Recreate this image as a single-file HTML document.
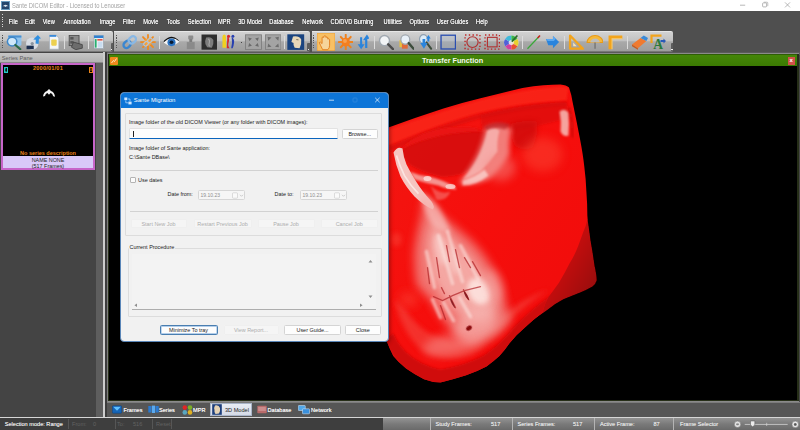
<!DOCTYPE html>
<html>
<head>
<meta charset="utf-8">
<title>Sante DICOM Editor</title>
<style>
*{box-sizing:border-box;margin:0;padding:0}
html,body{width:800px;height:430px;overflow:hidden;background:#000;font-family:"Liberation Sans","DejaVu Sans",sans-serif}
#app{position:absolute;left:0;top:0;width:800px;height:430px;overflow:hidden;background:#474747}
.abs{position:absolute}
i.grip{position:absolute;width:1.2px;background:repeating-linear-gradient(#d8d8d8 0,#d8d8d8 .8px,transparent .8px,transparent 1.7px)}
#titlebar{position:absolute;left:0;top:0;width:800px;height:12px;background:#fff}
#titlebar .t{position:absolute;left:12px;top:1px;font-size:6.400px;line-height:9px;color:#a2a2a2;white-space:nowrap;transform:scaleX(.905);transform-origin:0 0}
#menubar{position:absolute;left:0;top:11px;width:800px;height:20.500px;background:#4f4f4f}
#menubar span{position:absolute;top:7px;font-size:6.300px;line-height:8px;color:#f6f6f6;white-space:nowrap;text-shadow:0 0 .6px #fff,0 .4px 1px #222;text-align:center;transform:scaleX(.9);display:flex;justify-content:center}
#toolbar{position:absolute;left:0;top:31.200px;width:800px;height:20.5px;background:#4f4f4f}
.tb{position:absolute;top:0;height:20.5px;background:linear-gradient(#d2d2d2,#c2c2c2 45%,#a9a9a9 52%,#9e9e9e);border-radius:0 2px 2px 0;border-top:.5px solid #e6e6e6;border-bottom:.5px solid #777}
.tb i.grip{left:1.5px;top:3px;height:14px;background:repeating-linear-gradient(#555 0,#555 .8px,transparent .8px,transparent 1.7px)}
.tb b.sep{position:absolute;top:4px;height:13px;width:1px;background:linear-gradient(90deg,#8c8c8c 50%,#dcdcdc 50%)}
.tb svg{position:absolute}
.tb em.chev{position:absolute;right:0;bottom:0;width:2.800px;height:7.500px;background:#5c5c5c;border-radius:1px 0 1px 0}.tb em.chev:after{content:'';position:absolute;left:.8px;bottom:1px;width:1.200px;height:1.200px;background:#eee}
#mid{position:absolute;left:0;top:52px;width:800px;height:3px;background:#5a5a5a}
#left{position:absolute;left:0;top:52px;width:104.800px;height:365px;background:#444}
#vframe{position:absolute;left:107px;top:53px;width:691.500px;height:349px;background:#262e18;border-top:1px solid #8a8a8a;border-left:1px solid #7c7c7c;border-bottom:1px solid #8a8a8a}#vgap{position:absolute;left:105px;top:52px;width:2px;height:366px;background:#3c3c3c}
#viewer{position:absolute;left:108.500px;top:54.400px;width:688.200px;height:345.400px;background:#000;overflow:hidden}
#greenbar{position:absolute;left:0;top:0;width:688.200px;height:11.500px;border-top:.6px solid #2f5c06;background:linear-gradient(#458608,#3b7a02)}
#greenbar .gt{position:absolute;left:299px;width:90px;top:1.500px;text-align:center;font-size:7.250px;line-height:8px;font-weight:bold;color:#f4f8ee;white-space:nowrap}
#greenbar .gx{position:absolute;left:679px;top:1.5px;width:7.5px;height:8px;background:#d2524a;color:#fff;font-size:6px;line-height:7px;text-align:center;font-weight:bold}
#left .hdr{position:absolute;left:0;top:.5px;width:103.200px;height:10.5px;background:linear-gradient(#c6c6c6,#b2b2b2);color:#5e5e5e;font-size:5.700px;line-height:10px;padding-left:1.800px;white-space:nowrap;border-bottom:.5px solid #8a8a8a}
#left .strip{position:absolute;left:96px;top:11px;width:7.500px;height:354px;background:#5e5e5e}
#left .vline{position:absolute;left:103.200px;top:0;width:1.600px;height:365px;background:#cdcdcd}
#left .thumb{position:absolute;left:1px;top:11px;width:94px;height:107px;background:#000;border:2px solid #c765c9}
.thumb .tb1{position:absolute;left:.5px;top:2px;width:4px;height:6px;border:.6px solid #25c7c7;color:#25c7c7;font-size:4.5px;line-height:5px;text-align:center}
.thumb .tbx{position:absolute;left:85.500px;top:2px;width:4.5px;height:6px;border:.6px solid #e8841a;color:#e8841a;font-size:4.5px;line-height:4.6px;text-align:center}
.thumb .tdate{position:absolute;left:0;width:90px;top:.1px;text-align:center;font-size:5.6px;line-height:7px;font-weight:bold;color:#e8841a;letter-spacing:.2px}
.thumb .tnsd{position:absolute;left:0;width:90px;top:84.600px;text-align:center;font-size:5.5px;line-height:7px;font-weight:bold;color:#e8841a}
.thumb .tinfo{position:absolute;left:0;width:90px;top:91px;height:12px;background:#d9c9f9;text-align:center;font-size:5.400px;line-height:5.500px;color:#222;padding-top:2.300px}
#dlgsh{position:absolute;left:118px;top:91.500px;width:272px;height:252.500px;border-radius:6px;background:rgba(0,0,0,.35);filter:blur(2px)}
#dlg{position:absolute;left:119.500px;top:92px;width:269px;height:249.500px;background:#f1f1f1;border-radius:4px;overflow:hidden;border:.5px solid #5a86b8}
#dlgt{position:absolute;left:0;top:0;width:271px;height:16.300px;background:#0d75d8}
#dlgt .dt{position:absolute;left:14.300px;top:4.600px;font-size:5.950px;line-height:8px;color:#fff;white-space:nowrap}
.gb{position:absolute;border:.6px solid #dcdcdc;border-radius:1px}
.lbl{position:absolute;font-size:5.450px;line-height:7px;color:#222;white-space:nowrap}
.lbl.gl{background:#f1f1f1;padding:0 .5px}
.hr{position:absolute;height:.8px;background:#d2d2d2}
.inp{position:absolute;background:#fdfdfd;border:.5px solid #e2e2e2;border-bottom:1px solid #0a64bd;border-radius:1.500px 1.500px 0 0}
.inp u{position:absolute;left:3.500px;top:1.500px;width:.6px;height:6.500px;background:#222}
.btn{position:absolute;height:9.500px;border:.6px solid #d4d4d4;border-radius:1.500px;background:#fdfdfd;font-size:5.450px;line-height:8.400px;text-align:center;color:#222;white-space:nowrap}
.btn.dis{color:#adadad;background:#f5f5f5;border-color:#efefef;text-shadow:none}
.btn.foc{border:.8px solid #4a7eb0;box-shadow:0 0 0 .4px #6aa0d8 inset}
.chk{position:absolute;width:6px;height:6px;border:.6px solid #b4b4b4;border-radius:1px;background:#fbfbfb}
.date{position:absolute;height:10.500px;border:.6px solid #d6d6d6;border-radius:1.500px;background:#f6f6f6;font-size:5px;line-height:9.500px;color:#8e8e8e;padding-left:2px;white-space:nowrap}
.date svg{position:absolute;left:33px;top:1.700px}
.ta{position:absolute;background:#f3f3f3;border-bottom:.8px solid #adadad}
#tabbar{position:absolute;left:107px;top:401.500px;width:693px;height:15.500px;background:#565656;border-top:.8px solid #7c7c7c}
.tab{position:absolute;top:1px;height:12.500px;white-space:nowrap}
.tab svg{position:absolute;left:1.500px;top:1.500px}
.tab span{position:absolute;top:2.300px;font-size:5.600px;line-height:8px;color:#f0f0f0;text-shadow:0 0 .5px #fff}
.tab.sel{background:linear-gradient(#e8ecf4,#d4dae6);border:.6px solid #a8b4c8;top:.2px;height:13.600px}
.tab.sel span{color:#222;text-shadow:none}
.tab.sel svg{top:.8px}
#hline{position:absolute;left:0;top:416.700px;width:800px;height:1.100px;background:#d6d6d6}
#status{position:absolute;left:0;top:417.800px;width:800px;height:12.200px;background:#3e3e3e}
.sl{position:absolute;top:2.400px;font-size:5.600px;line-height:8px;color:#e2e2e2;white-space:nowrap;text-shadow:0 0 .5px #ddd}
.sl.dim{color:#626262;text-shadow:none}
b.ssep{position:absolute;top:1.500px;width:1px;height:9.500px;background:#565656}
#sright{position:absolute;left:382.500px;top:0;width:417.500px;height:12.200px;background:linear-gradient(#939393,#7a7a7a 50%,#6a6a6a)}
b.rsep{position:absolute;top:0;width:1.400px;height:12.200px;background:linear-gradient(90deg,#444 50%,#b4b4b4 50%)}
#dlgin{position:absolute;left:-1px;top:-1.500px;width:270px;height:251px}

</style>
</head>
<body>
<div id="app">
<div id="titlebar">
<svg class="abs" style="left:1px;top:1px" width="9" height="9" viewBox="0 0 9 9"><rect width="9" height="9" fill="#6a9cc0"/><rect x="1" y="1" width="7" height="7" fill="#24456c"/><path d="M1.5 5.5 Q4.5 2 7.5 5.5 L6 5 L4.5 6 L3 5Z" fill="#dfe8f0"/></svg>
<div class="t">Sante DICOM Editor - Licensed to Lenouser</div>
<svg class="abs" style="left:736px;top:0" width="64" height="11" viewBox="0 0 64 11"><path d="M4 5.2h5.2" stroke="#9a9a9a" stroke-width="0.7" fill="none"/><rect x="26.6" y="2.9" width="4" height="4" rx="0.8" fill="none" stroke="#9a9a9a" stroke-width="0.7"/><path d="M27.8 2.2h3.2q.8 0 .8.8v3.2" fill="none" stroke="#9a9a9a" stroke-width="0.6"/><path d="M49 2.4l5 5M54 2.4l-5 5" stroke="#9a9a9a" stroke-width="0.7" fill="none"/></svg>
</div>
<div id="menubar"><i class="grip" style="left:2px;top:3px;height:13px"></i><span style="left:9px;width:8.5px">File</span><span style="left:25px;width:10px">Edit</span><span style="left:43px;width:11.5px">View</span><span style="left:62px;width:30px">Annotation</span><span style="left:100px;width:15px">Image</span><span style="left:123px;width:12px">Filter</span><span style="left:143px;width:15.5px">Movie</span><span style="left:166.5px;width:12.5px">Tools</span><span style="left:187.5px;width:23.0px">Selection</span><span style="left:218.5px;width:10.5px">MPR</span><span style="left:237.5px;width:24.5px">3D Model</span><span style="left:270px;width:23px">Database</span><span style="left:301.5px;width:21.5px">Network</span><span style="left:331px;width:42px">CD/DVD Burning</span><span style="left:381.5px;width:21.5px">Utilities</span><span style="left:408.75px;width:20.75px">Options</span><span style="left:437px;width:31px">User Guides</span><span style="left:475.75px;width:11.75px">Help</span></div>
<div id="toolbar">
<div class="tb" style="left:0px;width:113.3px">
<i class="grip"></i>
<svg style="left:5.0px;top:2px" width="17.5" height="16.2" viewBox="0 0 16 16" preserveAspectRatio="none"><rect x="3" y="1.500" width="12" height="10" rx="1" fill="#8fc4ee"/><rect x="3" y="1.500" width="12" height="2" fill="#4a90d0"/><circle cx="6.500" cy="7.500" r="4.300" fill="#cfe8fa" stroke="#3f88c8" stroke-width="1.400"/><path d="M9.500 10.800l4.500 4.200" stroke="#2a6a4a" stroke-width="2" stroke-linecap="round"/></svg>
<svg style="left:25.0px;top:2px" width="16.5" height="16.2" viewBox="0 0 16 16" preserveAspectRatio="none"><circle cx="7" cy="9.500" r="6" fill="#d8dde4"/><circle cx="7" cy="9.500" r="1.600" fill="#8a94a0"/><path d="M8 5.500L12.500 1l3 3.500-2 .2-.3 5.300-3-.5.300-3.800z" fill="#2f8fe0"/><rect x="1.500" y="11.500" width="7" height="3.500" fill="#1d3050"/></svg>
<svg style="left:46.5px;top:2px" width="13.5" height="16.2" viewBox="0 0 16 16" preserveAspectRatio="none"><path d="M3 1h8l3 3v11H3z" fill="#f4f6f8" stroke="#9aa6b4" stroke-width=".6"/><rect x="3" y="1" width="8" height="1.800" fill="#3a8ad8"/><rect x="5" y="5.500" width="6.500" height="6" rx="1" fill="#ecd050"/></svg>
<b class="sep" style="left:63.5px"></b>
<svg style="left:67.0px;top:2px" width="17.5" height="16.2" viewBox="0 0 16 16" preserveAspectRatio="none"><rect x="2" y="1.500" width="9" height="10" fill="#8a8a8a" stroke="#4a4a4a" stroke-width=".8"/><rect x="3" y="3" width="3" height="2.500" fill="#555"/><rect x="3" y="7" width="3" height="2.500" fill="#555"/><path d="M6 8l8 2.500v3.500l-6 1.500L4 13z" fill="#6c6c6c" stroke="#3c3c3c" stroke-width=".7"/></svg>
<b class="sep" style="left:87.5px"></b>
<svg style="left:92.0px;top:2px" width="13.0" height="16.2" viewBox="0 0 16 16" preserveAspectRatio="none"><rect x="2.500" y="1.500" width="11.500" height="13" fill="#f0f2f4" stroke="#8a9aaa" stroke-width=".6"/><rect x="2.500" y="1.500" width="11.500" height="2.500" fill="#2f80d0"/><rect x="3.500" y="5" width="2.200" height="8.500" fill="#28b070"/><rect x="6.500" y="5" width="6.500" height="1.500" fill="#e04a3a"/><rect x="7" y="7.500" width="6" height="6" fill="#c8dcf0"/></svg>
<em class="chev"></em></div>
<div class="tb" style="left:114px;width:196px">
<i class="grip"></i>
<svg style="left:7.5px;top:2px" width="15.5" height="16.2" viewBox="0 0 16 16" preserveAspectRatio="none"><g transform="rotate(-40 8 8)" fill="none" stroke-width="2.400"><rect x="0.500" y="5" width="8" height="6" rx="3" stroke="#3a86d0"/><rect x="7.500" y="5" width="8" height="6" rx="3" stroke="#8ab8e4"/></g></svg>
<svg style="left:25.5px;top:2px" width="16.0" height="16.2" viewBox="0 0 16 16" preserveAspectRatio="none"><g stroke="#f08a1e" stroke-width="1.800" stroke-linecap="round"><path d="M8 1v14M1 8h14M3 3l10 10M13 3L3 13"/></g><circle cx="8" cy="8" r="3.600" fill="#f6a23c"/><g transform="rotate(-40 8 8)" fill="none" stroke="#b8c4d0" stroke-width="1.300"><rect x="3" y="6.200" width="5" height="3.600" rx="1.800"/><rect x="8" y="6.200" width="5" height="3.600" rx="1.800"/></g></svg>
<b class="sep" style="left:44.5px"></b>
<svg style="left:48.5px;top:2px" width="17.0" height="16.2" viewBox="0 0 16 16" preserveAspectRatio="none"><path d="M.5 8.500Q8 0 15.500 7.500Q8 15 .5 8.500z" fill="#f4f4f4"/><path d="M.5 8.500Q8 .500 15.500 7.500L14 5.500Q8-.500 1 6.500z" fill="#111"/><circle cx="8" cy="8.200" r="3.800" fill="#2a72c0"/><circle cx="8" cy="8.200" r="1.800" fill="#0a1a30"/></svg>
<svg style="left:70.5px;top:2px" width="11.5" height="16.2" viewBox="0 0 16 16" preserveAspectRatio="none"><rect x="4.500" y="1.500" width="7" height="4" rx="1" fill="#8c8c8c"/><rect x="6" y="5" width="4" height="3" fill="#7c7c7c"/><path d="M2.500 8h11v7h-11z" fill="#8a8a8a"/></svg>
<svg style="left:86.5px;top:2px" width="16.5" height="16.2" viewBox="0 0 16 16" preserveAspectRatio="none"><rect x=".5" y=".5" width="15" height="15" fill="#2e2e2e"/><path d="M5 3.500Q10 2 12 6Q12.500 10 10.500 13.500L6 13Q3.500 10 4 7z" fill="#7c7c7c"/><path d="M7 5q2 1 1 4t1 3" stroke="#a8a8a8" stroke-width="1" fill="none"/></svg>
<svg style="left:107.0px;top:2px" width="15.5" height="16.2" viewBox="0 0 16 16" preserveAspectRatio="none"><path d="M1.500 2.500h3.500l.5 11H1.500z" fill="#f0d020"/><circle cx="3.300" cy="2" r="1.600" fill="#f0d020"/><path d="M6.500 3q3 1 1.500 5t1 6H6z" fill="#d8282c"/><circle cx="7.800" cy="2.300" r="1.600" fill="#d8282c"/><path d="M11 3q3 1.500 2.500 5.500T12 14h-1.500q1.500-5 .5-11z" fill="#2840b0"/><circle cx="12.300" cy="2.300" r="1.500" fill="#2840b0"/></svg>
<b style="position:absolute;left:127.0px;top:9.500px;width:1px;height:1px;background:#444"></b>
<svg style="left:130.5px;top:2px" width="17.0" height="16.2" viewBox="0 0 16 16" preserveAspectRatio="none"><rect x=".5" y=".8" width="15" height="14.400" fill="#a4a4a4" stroke="#7c7c7c" stroke-width=".8"/><g fill="#6a6a6a"><path d="M3 3.500l3.500 1-2.500 2.500zM13 3.500l-3.500 1 2.500 2.500zM3 12.500l3.500-1-2.500-2.500zM13 12.500l-3.500-1 2.500-2.500z"/></g></svg>
<svg style="left:150.5px;top:2px" width="16.5" height="16.2" viewBox="0 0 16 16" preserveAspectRatio="none"><rect x=".5" y=".8" width="15" height="14.400" fill="#a4a4a4" stroke="#7c7c7c" stroke-width=".8"/><g fill="#6e6e6e"><path d="M2.500 2.800l3.800.6-3.200 3.200zM13.500 2.800l-3.800.6 3.200 3.200zM2.500 13.200l3.800-.6-3.200-3.200zM13.500 13.200l-3.800-.6 3.200-3.200z"/></g></svg>
<b class="sep" style="left:170.0px"></b>
<svg style="left:173.0px;top:2px" width="17.5" height="16.2" viewBox="0 0 16 16" preserveAspectRatio="none"><rect x=".3" y=".3" width="15.400" height="15.400" fill="#1a4480"/><path d="M5.500 2.500Q11 1.500 13 5.500Q13.500 10 11.500 14L7 13.500Q5.500 11 6 9L4 8z" fill="#e8d8b8"/><path d="M8.500 5.500l2 .3" stroke="#6a5a4a" stroke-width=".8"/></svg>
<em class="chev"></em></div>
<div class="tb" style="left:311.8px;width:361.7px">
<i class="grip"></i>
<svg style="left:5.2px;top:1.3px" width="18.0" height="17.8" viewBox="0 0 16 16" preserveAspectRatio="none"><rect x="0" y="0" width="16" height="16" rx="1" fill="#f8c064" stroke="#e89a30" stroke-width=".7"/><path d="M5 15Q3 11 2 8.500Q3 7.500 4.500 9.500V4q1-1 1.600 0V3q1-1.200 1.800 0v1q1-1 1.700.2V5.500q1-.8 1.600.3V11q0 2.500-1.500 4z" fill="#f6d49a" stroke="#e07a18" stroke-width=".8"/></svg>
<svg style="left:26.2px;top:2px" width="15.5" height="16.2" viewBox="0 0 16 16" preserveAspectRatio="none"><g stroke="#f0821c" stroke-width="2" stroke-linecap="round"><path d="M8 .8v14.400M.8 8h14.400M2.900 2.900l10.200 10.200M13.100 2.900L2.900 13.100"/></g><circle cx="8" cy="8" r="4.300" fill="#f47f20"/><circle cx="7.200" cy="7" r="2" fill="#f8a050"/></svg>
<svg style="left:45.7px;top:2px" width="13.0" height="16.2" viewBox="0 0 16 16" preserveAspectRatio="none"><path d="M5 15.500V7H2l5.500-6.500L10 3.500v2H8v10z" fill="#2a84dc" transform="translate(5.500 0) scale(.9)"/><path d="M4.500 1.500v8h-3.500L6 15.500l5-6h-3.500v-8z" fill="#2a84dc" transform="translate(0 2) scale(.85)"/></svg>
<b class="sep" style="left:62.2px"></b>
<svg style="left:66.7px;top:2px" width="16.0" height="16.2" viewBox="0 0 16 16" preserveAspectRatio="none"><circle cx="6.500" cy="6.500" r="5" fill="#f2f4f6" stroke="#a0a8b0" stroke-width="1.400"/><path d="M10.200 10.200l4.800 4.800" stroke="#4c4c4c" stroke-width="2.400" stroke-linecap="round"/></svg>
<svg style="left:87.2px;top:2px" width="15.5" height="16.2" viewBox="0 0 16 16" preserveAspectRatio="none"><rect x=".5" y="6" width="7" height="7" fill="#e8c040"/><rect x="3" y="9" width="6" height="5.500" fill="#e06a3a"/><circle cx="6.500" cy="5.500" r="4.600" fill="#e8f0f8" stroke="#a0a8b0" stroke-width="1.300"/><path d="M10 9l5 5.500" stroke="#3c4c3c" stroke-width="2.400" stroke-linecap="round"/></svg>
<svg style="left:106.7px;top:2px" width="14.5" height="16.2" viewBox="0 0 16 16" preserveAspectRatio="none"><circle cx="6" cy="5" r="4.300" fill="#dcecf8" stroke="#90a0b0" stroke-width="1.200"/><path d="M9.500 8.500l5 6" stroke="#3c4c3c" stroke-width="2.200" stroke-linecap="round"/><path d="M2.500 9h2.500v-4h3v4h2.500l-4 5.500z" fill="#2a84dc"/><path d="M11.500 1l2.500 3.500h-1.500v3h-2v-3H9z" fill="#2a84dc"/></svg>
<b class="sep" style="left:124.7px"></b>
<svg style="left:128.2px;top:2px" width="16.5" height="16.2" viewBox="0 0 16 16" preserveAspectRatio="none"><rect x="1" y="1.200" width="14" height="13.600" fill="#9cb0cc" fill-opacity=".25" stroke="#2a4eb0" stroke-width="1.300"/></svg>
<svg style="left:152.2px;top:2px" width="17.0" height="16.2" viewBox="0 0 16 16" preserveAspectRatio="none"><rect x="1" y="1" width="14" height="14" fill="none" stroke="#c02020" stroke-width="1.300" stroke-dasharray="1.300 2.200"/><circle cx="8" cy="8" r="5.300" fill="none" stroke="#b03030" stroke-width="1.100"/></svg>
<svg style="left:172.2px;top:2px" width="16.5" height="16.2" viewBox="0 0 16 16" preserveAspectRatio="none"><rect x="1" y="1" width="14" height="14" fill="none" stroke="#c02020" stroke-width="1.300" stroke-dasharray="1.300 2.200"/><rect x="3.300" y="3.300" width="9.400" height="9.400" fill="none" stroke="#b03030" stroke-width="1.100"/></svg>
<svg style="left:191.2px;top:2px" width="16.5" height="16.2" viewBox="0 0 16 16" preserveAspectRatio="none"><circle cx="8" cy="8.500" r="7" fill="#e8e8e8"/><path d="M8 8.500L8 1.500A7 7 0 0 1 14 5z" fill="#3cb84a"/><path d="M8 8.500L14 5A7 7 0 0 1 14 12z" fill="#e8d030"/><path d="M8 8.500L14 12A7 7 0 0 1 8 15.500z" fill="#e85030"/><path d="M8 8.500L8 15.500A7 7 0 0 1 2 12z" fill="#d040a0"/><path d="M8 8.500L2 12A7 7 0 0 1 2 5z" fill="#5060d8"/><path d="M8 8.500L2 5A7 7 0 0 1 8 1.500z" fill="#40b8d8"/><circle cx="8" cy="8.500" r="2.500" fill="#f4f4f4" fill-opacity=".8"/><path d="M8.500 7.500L14 1.500" stroke="#2a6a2a" stroke-width="1.600"/></svg>
<b class="sep" style="left:210.7px"></b>
<svg style="left:214.2px;top:2px" width="15.5" height="16.2" viewBox="0 0 16 16" preserveAspectRatio="none"><path d="M1.500 14.500L14 2" stroke="#3aa83a" stroke-width="1.300"/><path d="M12 4L14.500 1.500" stroke="#d02020" stroke-width="1.500"/></svg>
<svg style="left:233.7px;top:2px" width="15.0" height="16.2" viewBox="0 0 16 16" preserveAspectRatio="none"><path d="M1 5h7.500V2L15 8l-6.500 6v-3H3.500z" fill="#2a84dc"/><path d="M1 5h7.500V2l3 2.800-2 2.200H3z" fill="#5aa8f0"/></svg>
<b class="sep" style="left:252.2px"></b>
<svg style="left:256.2px;top:2px" width="16.5" height="16.2" viewBox="0 0 16 16" preserveAspectRatio="none"><path d="M2 1.500L14.500 14.500H2z" fill="none" stroke="#f2a41c" stroke-width="2.200" stroke-linejoin="round"/><path d="M5 8.500l3.500 3.500H5z" fill="#fbe4b0"/></svg>
<svg style="left:274.2px;top:2px" width="17.0" height="16.2" viewBox="0 0 16 16" preserveAspectRatio="none"><path d="M1 8.500A7.500 7 0 0 1 16 8.500z" fill="#f6b838" stroke="#e89a18" stroke-width="1"/><path d="M4 8.500A4.500 4 0 0 1 13 8.500z" fill="#bcbcbc"/><path d="M8.500 8.500v6" stroke="#666" stroke-width="1"/></svg>
<svg style="left:295.2px;top:2px" width="17.5" height="16.2" viewBox="0 0 16 16" preserveAspectRatio="none"><path d="M3 15V3h11" fill="none" stroke="#f2a41c" stroke-width="3.200"/><path d="M4.600 15V4.600H14" fill="none" stroke="#f8cc70" stroke-width="1"/></svg>
<b class="sep" style="left:315.2px"></b>
<svg style="left:319.2px;top:2px" width="17.0" height="16.2" viewBox="0 0 16 16" preserveAspectRatio="none"><path d="M1 10.500L9 4l5.500 3-8 7z" fill="#f07a30"/><path d="M9 4l3-2.500L16 4l-1.500 3z" fill="#3a8ad8"/><path d="M1 10.500l5.500 3.500v1.500L1 12z" fill="#c85a1a"/></svg>
<svg style="left:338.2px;top:2px" width="16.0" height="16.2" viewBox="0 0 16 16" preserveAspectRatio="none"><path d="M1.500 9V1.500h10" fill="none" stroke="#f2a41c" stroke-width="2.200"/><text x="3.200" y="15.300" font-family="Liberation Serif,serif" font-size="13.500" font-weight="bold" fill="#2a7a3a">A</text><path d="M10.500 6h3V4.500L16 7l-2.500 2.500V8h-3z" fill="#2a5ab8"/></svg>
<em class="chev"></em></div>
</div>
<div id="mid"></div>
<div id="left">
<div class="hdr">Series Pane</div>
<div class="strip"></div>
<div class="vline"></div>
<div class="thumb">
<div class="tb1">1</div><div class="tdate">2000/01/01</div><div class="tbx">x</div>
<svg class="abs" style="left:38.500px;top:22.500px" width="14" height="10" viewBox="0 0 14 10"><path d="M1 8.5Q1.5 4 5 3L7 1L9 3Q12.5 4.2 13 8.8L11.2 8.2Q10.5 5.5 8.6 5L7 6.8L5.4 5Q3.5 5.5 3 8Z" fill="#f2f2f2"/></svg>
<div class="tnsd">No series description</div>
<div class="tinfo">NAME NONE<br>(517 Frames)</div>
</div>
</div>

<div id="vgap"></div><div id="vframe"></div>
<div id="viewer"><div id="greenbar"><svg class="abs" style="left:1px;top:1.5px" width="8" height="8" viewBox="0 0 8 8"><rect width="8" height="8" rx="1" fill="#f08a1c"/><path d="M1.5 6l2-2.5 1 1 2-3" stroke="#fff3d0" stroke-width="0.9" fill="none"/></svg><div class="gt">Transfer Function</div><div class="gx">x</div></div>
<svg class="abs" style="left:0;top:0" width="688.200" height="345.400" viewBox="108.500 54.400 688.200 345.400">
<defs>
<filter id="b0" x="-20%" y="-20%" width="140%" height="140%"><feGaussianBlur stdDeviation=".6"/></filter>
<filter id="b1" x="-20%" y="-20%" width="140%" height="140%"><feGaussianBlur stdDeviation="1.100"/></filter>
<filter id="b2" x="-30%" y="-30%" width="160%" height="160%"><feGaussianBlur stdDeviation="2.500"/></filter>
<filter id="b4" x="-40%" y="-40%" width="180%" height="180%"><feGaussianBlur stdDeviation="5"/></filter>
<filter id="b8" x="-50%" y="-50%" width="200%" height="200%"><feGaussianBlur stdDeviation="9"/></filter>
<linearGradient id="gbody" x1="0" y1="0" x2="1" y2="1"><stop offset="0" stop-color="#f21812"/><stop offset=".5" stop-color="#f60e0c"/><stop offset="1" stop-color="#ee0c0c"/></linearGradient>
<linearGradient id="gflap" x1="0" y1="0" x2="1" y2="1"><stop offset="0" stop-color="#e01212"/><stop offset=".55" stop-color="#c00c0c"/><stop offset="1" stop-color="#860606"/></linearGradient>
<clipPath id="cbody"><path d="M380 132L388 128Q415 118 443 109Q462 103 480 98.700Q500 93.500 522 88.300Q545 85 560 85Q566 85.500 568.500 88Q571 95 572 102L576.300 123L579.600 140Q582.500 155 583.800 167Q585.500 180 585.900 192Q587 206 586.900 220Q585.500 227 582.700 232.600Q580 240 577.500 247Q574 256 569 264Q564 274 558.600 283Q553 291 548 297.500Q544 304 542 313Q533 320 524.400 328Q516 335 509 343.700Q504 351 498.900 356.500Q493 362 486 366.800Q476 372 465.600 375.700Q452 380 440 383Q431 382.500 423.500 379.600Q414 375 405.600 369Q398 363 392.800 356.500Q389 349 386 341L380 341Z"/></clipPath>
</defs>
<!-- outer translucent flap -->
<path d="M584 200Q588 225 590 241Q592.500 255 594 266Q596 275 596.300 280.700Q595 285 592 287Q586 290.500 579.600 293Q571 296.500 562.800 299.600Q554 304 546 311L530 322L560 250Z" fill="url(#gflap)" filter="url(#b0)"/>
<path d="M380 132L388 128Q415 118 443 109Q462 103 480 98.700Q500 93.500 522 88.300Q545 85 560 85Q566 85.500 568.500 88Q571 95 572 102L576.300 123L579.600 140Q582.500 155 583.800 167Q585.500 180 585.900 192Q587 206 586.900 220Q585.500 227 582.700 232.600Q580 240 577.500 247Q574 256 569 264Q564 274 558.600 283Q553 291 548 297.500Q544 304 542 313Q533 320 524.400 328Q516 335 509 343.700Q504 351 498.900 356.500Q493 362 486 366.800Q476 372 465.600 375.700Q452 380 440 383Q431 382.500 423.500 379.600Q414 375 405.600 369Q398 363 392.800 356.500Q389 349 386 341L380 341Z" fill="url(#gbody)"/>
<g clip-path="url(#cbody)">
<!-- bottom rim darker band -->
<path d="M384 341Q392 360 406 371Q424 384 440 386Q470 379 487 369Q502 357 510 345Q526 328 543 314L562 300L553 294Q530 310 513 328Q499 346 483 356Q464 366 440 370Q420 366 406 353Q397 344 393 334Z" fill="#cc0a0a" filter="url(#b1)" opacity=".9"/>
<!-- chin lighter zone -->
<path d="M394 300Q400 330 420 350Q440 364 470 356Q492 346 506 326Q520 308 548 290Q520 300 500 318Q480 340 450 342Q420 335 405 310Z" fill="#f43a34" filter="url(#b2)" opacity=".8"/>
<!-- top band lighter -->
<path d="M380 134L388 130Q443 111 480 100.500Q522 90 560 87L568 88L566 101Q520 103 480 113Q440 124 388 146L380 148Z" fill="#fa2a1a" opacity=".7" filter="url(#b1)"/>
<path d="M388 147Q440 125 480 114.500Q520 104.500 566 102L566 106Q520 109 480 119Q440 130 390 152Z" fill="#cc0c0c" opacity=".5" filter="url(#b1)"/>
<!-- eye socket (darker) -->
<path d="M399 151Q420 136 452 131Q478 128 488 134Q486 150 476 166Q462 178 440 177Q418 172 408 164Q402 158 399 151Z" fill="#d41010" filter="url(#b1)" opacity=".85"/>
<path d="M400 150Q440 131 486 132Q474 124 440 129Q414 134 400 150Z" fill="#ea1612" filter="url(#b1)" opacity=".9"/>
<!-- second socket region right -->
<path d="M480 116Q520 105 566 103L570 118Q548 124 530 128Q505 132 482 132Z" fill="#d40e0e" filter="url(#b1)" opacity=".55"/>
<path d="M511 124Q522 120 536 122Q538 136 532 148Q522 152 514 146Q510 136 511 124Z" fill="#cc0e0e" filter="url(#b2)" opacity=".75"/>
<ellipse cx="542" cy="155" rx="20" ry="17" fill="#fb4634" filter="url(#b4)" opacity=".5"/>
<!-- nasal arch pink -->
<path d="M485 128Q498 122 511 129Q508 142 509 154Q502 168 488 180Q474 186 458 184Q466 174 474 160Q482 145 485 128Z" fill="#f29894" filter="url(#b2)" opacity=".8"/>
<path d="M487 130Q494 127 499 131Q496 142 497 152Q490 162 480 172Q470 178 462 180Q474 166 480 152Q485 140 487 130Z" fill="#f8ccc8" filter="url(#b1)" opacity=".6"/>
<ellipse cx="500" cy="168" rx="15" ry="13" fill="#f48480" filter="url(#b4)" opacity=".5"/>
<path d="M484 127Q496 120 510 125L504 130Q494 126 486 131Z" fill="#b01c20" filter="url(#b1)" opacity=".55"/>
<path d="M462 181Q474 178 484 170L488 176Q476 186 462 186Z" fill="#fbe0dc" filter="url(#b1)" opacity=".7"/>
<!-- small pink at upper right -->
<path d="M559 112Q564 108 568 113Q569 124 568 136Q563 138 560 132Q561 122 559 112Z" fill="#f6b4ae" filter="url(#b1)" opacity=".9"/>
<path d="M569 108Q572 120 572 138" stroke="#a00c0c" stroke-width="1.600" fill="none" filter="url(#b1)" opacity=".6"/>
<!-- left white streaks -->
<path d="M393 153Q397 146 402 149Q403 158 406 165Q410 173 415 181Q421 191 431 202Q435 208 432 210Q422 205 414 197Q405 187 400 177Q395 165 393 153Z" fill="#f7cfca" filter="url(#b0)" opacity=".95"/><path d="M396 156Q399 166 404 176Q410 186 418 194" stroke="#fdeeea" stroke-width="1.600" fill="none" filter="url(#b0)" opacity=".8"/>
<path d="M409 172Q418 176 428 177Q440 180 448 184Q455 186 456 190Q446 190 438 186Q426 184 414 180Z" fill="#f6aaa6" filter="url(#b1)" opacity=".85"/>
<ellipse cx="427" cy="179" rx="4" ry="2.500" fill="#fde0dc" filter="url(#b0)" opacity=".8"/>
<ellipse cx="450" cy="187" rx="5" ry="2.500" fill="#fcd4d0" filter="url(#b0)" opacity=".8"/>
<path d="M430 186Q440 196 450 192Q446 202 436 200Z" fill="#f47874" filter="url(#b1)" opacity=".6"/>
<!-- jaw pink fan -->
<path d="M424 195Q432 206 440 215Q456 228 470 240Q482 252 490 265Q498 280 503 297Q508 310 510 320Q504 330 495 335Q482 342 470 345Q458 340 450 330Q438 316 430 300Q420 292 416 285Q413 268 414 250Q416 234 420 220Q422 206 424 195Z" fill="#f08c88" filter="url(#b4)" opacity=".8"/>
<path d="M432 222Q444 230 456 244Q470 256 480 272Q490 286 496 302Q494 316 482 322Q466 322 454 310Q440 296 432 278Q426 258 428 240Z" fill="#f6bcb8" filter="url(#b4)" opacity=".72"/>
<ellipse cx="478" cy="292" rx="10" ry="14" transform="rotate(-25 478 292)" fill="#fff0ec" filter="url(#b2)" opacity=".75"/>
<ellipse cx="440" cy="250" rx="5" ry="16" transform="rotate(-14 440 250)" fill="#fbd6d2" filter="url(#b2)" opacity=".6"/>
<ellipse cx="452" cy="262" rx="4" ry="14" transform="rotate(-18 452 262)" fill="#fbd6d2" filter="url(#b2)" opacity=".55"/>
<!-- connection streak->fan and chin pink -->
<path d="M420 192Q430 198 438 208Q446 220 450 234Q440 232 432 226Q424 214 420 192Z" fill="#f7bcb8" filter="url(#b2)" opacity=".75"/>
<ellipse cx="476" cy="324" rx="22" ry="15" transform="rotate(-28 476 324)" fill="#f6b4b0" filter="url(#b4)" opacity=".65"/>
<ellipse cx="494" cy="285" rx="8" ry="16" transform="rotate(-20 494 285)" fill="#f6b4b0" filter="url(#b4)" opacity=".5"/>
<ellipse cx="452" cy="344" rx="30" ry="11" transform="rotate(-12 452 344)" fill="#f58e8a" filter="url(#b4)" opacity=".55"/>
<!-- teeth light strips -->
<g stroke="#fce6e2" stroke-width="3.600" stroke-linecap="round" fill="none" filter="url(#b1)" opacity=".55">
<path d="M438 236L452 284"/><path d="M447 232L462 282"/><path d="M426 252L434 288"/><path d="M460 246L478 280"/>
<path d="M443 303L453 321"/><path d="M459 298L470 317"/><path d="M432 300L440 318"/>
</g>
<!-- teeth dark streaks -->
<g stroke="#b02226" stroke-width="1.300" stroke-linecap="round" fill="none" filter="url(#b0)" opacity=".7">
<path d="M446 246L449 262"/><path d="M455 250L459 268"/><path d="M436 258L439 278"/><path d="M427 268L429 284"/>
<path d="M463 290L468 300"/><path d="M449 296L455 308"/><path d="M441 288L444 294"/>
<path d="M433 297L442 301L452 296L464 291L480 287"/><path d="M440 306L445 320"/><path d="M464 258L470 268"/><path d="M472 262L480 276"/>
</g>
<path d="M449 298Q452 300 455 309Q451 306 449 298ZM463 291Q467 294 469 301Q464 298 463 291Z" fill="#7c1014" filter="url(#b0)" opacity=".8"/>
<ellipse cx="468.500" cy="328.500" rx="3" ry="2.200" transform="rotate(-35 468.500 328.500)" fill="#8c0c10" filter="url(#b0)"/>
<!-- cheek highlight left -->
<ellipse cx="408" cy="300" rx="10" ry="8" fill="#f8342c" filter="url(#b4)" opacity=".7"/>
<ellipse cx="396" cy="240" rx="5" ry="7" fill="#f83c30" filter="url(#b2)" opacity=".6"/>
</g>
</svg>

</div>
<div id="tabbar">
<div class="tab" style="left:3px;width:34px"><svg width="10" height="9" viewBox="0 0 10 9"><rect x=".3" y=".8" width="9.400" height="7.400" rx="1" fill="#1565b8"/><path d="M1.200 1.800h7.600l-3.800 4z" fill="#5fc0ff"/><rect x=".3" y=".8" width="9.400" height="7.400" rx="1" fill="none" stroke="#0b3f78" stroke-width=".5"/></svg><span style="left:13.500px">Frames</span></div>
<div class="tab" style="left:39px;width:32px"><svg width="11" height="9" viewBox="0 0 11 9"><rect x=".3" y="1" width="3.200" height="6.500" fill="#2a7ad0"/><rect x="3.900" y=".6" width="3.200" height="7.400" fill="#59a9ee"/><rect x="7.500" y="1" width="3.200" height="6.500" fill="#2a7ad0"/></svg><span style="left:13px">Series</span></div>
<div class="tab" style="left:73px;width:28px"><svg width="11" height="10" viewBox="0 0 11 10"><circle cx="2.800" cy="2.600" r="2.300" fill="#e02626"/><circle cx="8" cy="2.600" r="2.300" fill="#7bb026"/><circle cx="2.800" cy="7.400" r="2.300" fill="#5aa6c0"/><circle cx="8" cy="7.400" r="2.300" fill="#e0b020"/></svg><span style="left:13px">MPR</span></div>
<div class="tab sel" style="left:102.500px;width:42px"><svg width="10" height="11" viewBox="0 0 10 11"><rect x=".2" y=".2" width="9.600" height="10.600" fill="#1d3f7c"/><path d="M3 1.500Q7 .8 8 4Q8.500 7 7 9.500L3.500 10Q2 8 2.500 6Q1.500 4 3 1.500z" fill="#e4d2b4"/></svg><span style="left:14.500px">3D Model</span></div>
<div class="tab" style="left:148px;width:40px"><svg width="10" height="9" viewBox="0 0 10 9"><rect x=".3" y=".8" width="9.400" height="7.400" rx=".8" fill="#b86a6a"/><path d="M1.200 3h7.600M1.200 5h7.600" stroke="#e8c0c0" stroke-width=".8"/></svg><span style="left:12.500px">Database</span></div>
<div class="tab" style="left:189.500px;width:40px"><svg width="12" height="10" viewBox="0 0 12 10"><rect x=".3" y=".5" width="7" height="5" rx=".6" fill="#52a8e8" stroke="#d8ecff" stroke-width=".5"/><rect x="4.500" y="3.800" width="7" height="5" rx=".6" fill="#3a90dc" stroke="#d8ecff" stroke-width=".5"/></svg><span style="left:14.500px">Network</span></div>
</div>
<div id="hline"></div>
<div id="status">
<div class="sl" style="left:4.700px;color:#e4e4e4">Selection mode: Range</div>
<b class="ssep" style="left:68px"></b>
<div class="sl dim" style="left:72px">From:</div><div class="sl dim" style="left:93px">0</div>
<b class="ssep" style="left:114.500px"></b>
<div class="sl dim" style="left:117px">To:</div><div class="sl dim" style="left:133px">516</div>
<b class="ssep" style="left:152px"></b>
<div class="sl dim" style="left:156px">Reset</div>
<b class="ssep" style="left:171px"></b>
<div id="sright">
<b class="rsep" style="left:47.500px"></b>
<div class="sl" style="left:53px">Study Frames:</div><div class="sl" style="left:108.500px">517</div>
<b class="rsep" style="left:129px"></b>
<div class="sl" style="left:135px">Series Frames:</div><div class="sl" style="left:190.500px">517</div>
<b class="rsep" style="left:211.500px"></b>
<div class="sl" style="left:217.500px">Active Frame:</div><div class="sl" style="left:271px">87</div>
<b class="rsep" style="left:290px"></b>
<div class="sl" style="left:297.500px">Frame Selector</div>
<svg class="abs" style="left:348px;top:0" width="70" height="12.200" viewBox="0 0 70 12.200"><path d="M13.700 6.400h43" stroke="#d4d4d4" stroke-width=".8"/><path d="M35.700 4.800v3.200" stroke="#d4d4d4" stroke-width=".7"/><circle cx="6.500" cy="6.300" r="3.200" fill="#e4e4e4" stroke="#6a6a6a" stroke-width=".5"/><circle cx="6.500" cy="6.300" r="1.500" fill="#bdbdbd"/><path d="M5.300 6.300h2.400" stroke="#555" stroke-width=".7"/><circle cx="64.300" cy="6.400" r="3.300" fill="#e8e8e8" stroke="#6a6a6a" stroke-width=".5"/><circle cx="64.300" cy="6.400" r="1.500" fill="#8a8a8a"/><path d="M63.100 6.400h2.400M64.300 5.200v2.400" stroke="#444" stroke-width=".6"/><path d="M19.500 3h4.300v4l-2.150 1.800L19.500 7z" fill="#ececec" stroke="#555" stroke-width=".5"/></svg>
</div>
</div>

<div id="dlgsh"></div>
<div id="dlg"><div id="dlgin">
<div id="dlgt">
<svg class="abs" style="left:4.5px;top:5px" width="8" height="8" viewBox="0 0 8 8"><rect x=".3" y=".5" width="3" height="2.6" fill="#cfe6ff"/><rect x="4.4" y="4.6" width="3.2" height="2.8" fill="#cfe6ff"/><path d="M1.8 3.4v2.4h2.4M6 4.3V2H4" stroke="#bfe0ff" stroke-width=".7" fill="none"/></svg>
<div class="dt">Sante Migration</div>
<svg class="abs" style="left:201px;top:-.8px" width="68" height="17" viewBox="0 0 68 17"><path d="M8 9.2h5" stroke="#fff" stroke-width=".7"/><rect x="32" y="7" width="4" height="4" rx=".8" fill="none" stroke="#3a8ce0" stroke-width=".7"/><path d="M54.2 6.8l4.4 4.4M58.6 6.8l-4.4 4.4" stroke="#fff" stroke-width=".7"/></svg>
</div>
<div class="gb" style="left:5.5px;top:21.5px;width:257px;height:123px"></div>
<div class="lbl" style="left:9.500px;top:27px">Image folder of the old DICOM Viewer (or any folder with DICOM images):</div>
<div class="inp" style="left:9px;top:36.5px;width:209px;height:10.5px"><u></u></div>
<div class="btn" style="left:222px;top:37.5px;width:36.5px;height:9.5px">Browse...</div>
<div class="lbl" style="left:9.500px;top:53.5px">Image folder of Sante application:</div>
<div class="lbl" style="left:9.500px;top:62.5px">C:\Sante DBase\</div>
<div class="hr" style="left:10px;top:78px;width:248px"></div>
<div class="chk" style="left:10.5px;top:85.5px"></div>
<div class="lbl" style="left:18.5px;top:85.2px">Use dates</div>
<div class="lbl" style="left:48px;top:99.5px">Date from:</div>
<div class="date" style="left:78px;top:98px;width:47.5px">19.10.23<svg width="12" height="7" viewBox="0 0 12 7"><rect x=".5" y=".8" width="5" height="5.4" rx=".8" fill="#fafafa" stroke="#c8c8c8" stroke-width=".6"/><path d="M8 2.8l1.5 1.5 1.5-1.500" stroke="#b8b8b8" stroke-width=".7" fill="none"/></svg></div>
<div class="lbl" style="left:155px;top:99.5px">Date to:</div>
<div class="date" style="left:180px;top:98px;width:47.5px">19.10.23<svg width="12" height="7" viewBox="0 0 12 7"><rect x=".5" y=".8" width="5" height="5.4" rx=".8" fill="#fafafa" stroke="#c8c8c8" stroke-width=".6"/><path d="M8 2.8l1.500 1.5 1.5-1.5" stroke="#b8b8b8" stroke-width=".7" fill="none"/></svg></div>
<div class="hr" style="left:10px;top:119.500px;width:248px"></div>
<div class="btn dis" style="left:11px;top:127px;width:56px">Start New Job</div>
<div class="btn dis" style="left:74px;top:127px;width:58px">Restart Previous Job</div>
<div class="btn dis" style="left:138px;top:127px;width:57px">Pause Job</div>
<div class="btn dis" style="left:201px;top:127px;width:57.500px">Cancel Job</div>
<div class="gb" style="left:8px;top:156px;width:254.500px;height:69.500px"></div>
<div class="lbl gl" style="left:9.500px;top:152.500px">Current Procedure</div>
<div class="ta" style="left:12.500px;top:162.500px;width:243.500px;height:56px">
<svg class="abs" style="left:0;top:0" width="244" height="56" viewBox="0 0 244 56"><path d="M236.500 8.500l2-2.600 2 2.600zM236.500 41.500l2 2.600 2-2.600zM5 49.500l-2.600 1.800 2.600 1.800zM228 49.500l2.600 1.800-2.600 1.800z" fill="#8e8e8e"/></svg>
</div>
<div class="btn foc" style="left:40px;top:233.500px;width:58px">Minimize To tray</div>
<div class="btn dis" style="left:104px;top:233.500px;width:55px">View Report...</div>
<div class="btn" style="left:164.500px;top:233.500px;width:57px">User Guide...</div>
<div class="btn" style="left:225.500px;top:233.500px;width:35.500px">Close</div>
</div></div>

</div>
</body>
</html>
